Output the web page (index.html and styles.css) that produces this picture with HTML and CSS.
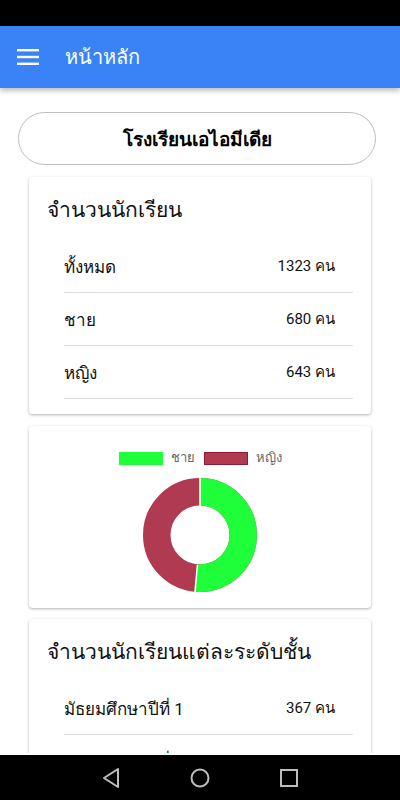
FILE: index.html
```html
<!DOCTYPE html>
<html lang="th">
<head>
    <meta charset="UTF-8">
    <meta name="viewport" content="width=device-width, initial-scale=1.0">
    <title>หน้าหลัก</title>
    <link rel="stylesheet" href="styles.css">
</head>
<body>

<div class="status-bar"></div>

<header class="app-bar">
    <svg class="menu-icon" width="22" height="16" viewBox="0 0 22 16">
        <rect x="0" y="0" width="22" height="2.4" fill="#fff"/>
        <rect x="0" y="6.8" width="22" height="2.4" fill="#fff"/>
        <rect x="0" y="13.6" width="22" height="2.4" fill="#fff"/>
    </svg>
    <h1 class="app-title">หน้าหลัก</h1>
</header>

<main class="content">
    <div class="school-pill">โรงเรียนเอไอมีเดีย</div>

    <section class="card">
        <h2 class="card-title">จำนวนนักเรียน</h2>
        <ul class="stat-list">
            <li class="stat-row"><span>ทั้งหมด</span><span class="stat-value">1323 คน</span></li>
            <li class="stat-row"><span>ชาย</span><span class="stat-value">680 คน</span></li>
            <li class="stat-row"><span>หญิง</span><span class="stat-value">643 คน</span></li>
        </ul>
    </section>

    <section class="card chart-card">
        <div class="legend">
            <span class="legend-item"><span class="swatch swatch-male"></span>ชาย</span>
            <span class="legend-item"><span class="swatch swatch-female"></span>หญิง</span>
        </div>
        <!-- donut: male 680 / female 643, starts at top, clockwise -->
        <svg class="donut" width="114" height="114" viewBox="0 0 114 114">
            <circle cx="57" cy="57" r="43.25" fill="none" stroke="#b03a51" stroke-width="27.5"/>
            <circle cx="57" cy="57" r="43.25" fill="none" stroke="#1eff3a" stroke-width="27.5"
                    stroke-dasharray="139.7 300" transform="rotate(-90 57 57)"/>
            <line x1="57" y1="0" x2="57" y2="30" stroke="#fff" stroke-width="1.5"/>
            <line x1="54.4" y1="86.9" x2="52" y2="114" stroke="#fff" stroke-width="1.5"/>
        </svg>
    </section>

    <section class="card">
        <h2 class="card-title">จำนวนนักเรียนแต่ละระดับชั้น</h2>
        <ul class="stat-list">
            <li class="stat-row"><span>มัธยมศึกษาปีที่ 1</span><span class="stat-value">367 คน</span></li>
            <li class="stat-row"><span>มัธยมศึกษาปีที่ 2</span><span class="stat-value">350 คน</span></li>
        </ul>
    </section>
</main>

<nav class="nav-bar">
    <svg width="18" height="22" viewBox="0 0 18 22">
        <path d="M16 2 L2 11 L16 20 Z" fill="none" stroke="#bdbdbd" stroke-width="2" stroke-linejoin="round"/>
    </svg>
    <svg width="20" height="20" viewBox="0 0 20 20">
        <circle cx="10" cy="10" r="8.5" fill="none" stroke="#bdbdbd" stroke-width="2"/>
    </svg>
    <svg width="18" height="18" viewBox="0 0 18 18">
        <rect x="1" y="1" width="16" height="16" fill="none" stroke="#bdbdbd" stroke-width="2"/>
    </svg>
</nav>

</body>
</html>
```

FILE: styles.css
```css
/* Global */
body {
    margin: 0;
    padding: 0;
    font-family: 'Roboto', 'Noto Sans', sans-serif;
    background: #fff;
    color: #111;
    height: 800px;
    overflow: hidden;
}

.status-bar {
    height: 26px;
    background: #000;
}

.app-bar {
    height: 62px;
    background: #3a83f6;
    display: flex;
    align-items: center;
    padding-left: 17px;
    box-shadow: 0 3px 5px rgba(0, 0, 0, 0.25);
    position: relative;
}

.menu-icon {
    margin-right: 26px;
}

.app-title {
    margin: 0;
    font-size: 20px;
    font-weight: 500;
    color: #fff;
}

.content {
    padding: 24px 24px 0 18px;
    height: 641px;
    overflow: hidden;
}

.school-pill {
    height: 51px;
    border: 1px solid #bdbdbd;
    border-radius: 27px;
    display: flex;
    justify-content: center;
    align-items: center;
    font-size: 19px;
    font-weight: 700;
    color: #000;
    margin-bottom: 12px;
}

.card {
    margin: 0 5px 12px 11px;
    background: #fff;
    border-radius: 4px;
    box-shadow: 0 1px 3px rgba(0, 0, 0, 0.3);
    padding: 16px 18px 15px 18px;
}

.chart-card {
    margin-bottom: 11px;
}

.card-title {
    margin: 0 0 14px 0;
    font-size: 21px;
    font-weight: 400;
    color: #111;
}

.stat-list {
    list-style: none;
    margin: 0;
    padding: 0 0 0 17px;
}

.stat-row {
    display: flex;
    justify-content: space-between;
    align-items: center;
    height: 52px;
    border-bottom: 1px solid #dcdcdc;
    font-size: 17px;
    padding-right: 18px;
}

.stat-value {
    font-size: 15px;
}

.chart-card {
    display: flex;
    flex-direction: column;
    align-items: center;
    padding: 24px 0 16px 0;
}

.legend {
    display: flex;
    gap: 9px;
    font-size: 13px;
    line-height: 16px;
    color: #666;
    margin-bottom: 12px;
}

.legend-item {
    display: flex;
    align-items: center;
}

.swatch {
    width: 44px;
    height: 13px;
    margin-right: 8px;
}

.swatch-male {
    background: #1eff3a;
}

.swatch-female {
    background: #b03a51;
    border: 1px solid #8e1c33;
    box-sizing: border-box;
}

.donut {
    display: block;
}

.nav-bar {
    position: fixed;
    left: 0;
    right: 0;
    bottom: 0;
    height: 45px;
    background: #000;
    display: flex;
    justify-content: center;
    align-items: center;
    gap: 70px;
}
```
